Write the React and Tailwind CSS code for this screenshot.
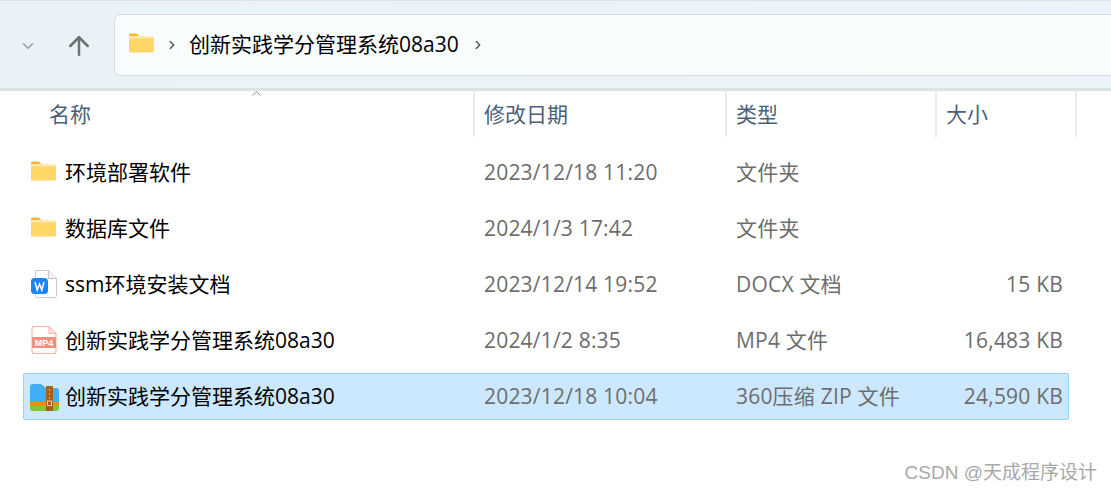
import { ChevronDown, ChevronRight, ChevronUp, ArrowUp } from 'lucide-react';

const latin = '[font-family:"Open_Sans","Noto_Sans_CJK_SC",sans-serif]';

const files = [
  { name: '环境部署软件', date: '2023/12/18 11:20', type: '文件夹', size: '', icon: 'folder' },
  { name: '数据库文件', date: '2024/1/3 17:42', type: '文件夹', size: '', icon: 'folder' },
  { name: 'ssm环境安装文档', date: '2023/12/14 19:52', type: 'DOCX 文档', size: '15 KB', icon: 'docx' },
  { name: '创新实践学分管理系统08a30', date: '2024/1/2 8:35', type: 'MP4 文件', size: '16,483 KB', icon: 'mp4' },
  { name: '创新实践学分管理系统08a30', date: '2023/12/18 10:04', type: '360压缩 ZIP 文件', size: '24,590 KB', icon: 'zip', selected: true },
];

function FolderIcon({ className }) {
  return (
    <svg viewBox="0 0 25 20" className={className}>
      <path d="M0 2a1.5 1.5 0 0 1 1.5-1.5h6l3 2.5H0z" fill="#f5b730" />
      <path d="M0 4.5h23.5a1.5 1.5 0 0 1 1.5 1.5v12a1.5 1.5 0 0 1-1.5 1.5h-22A1.5 1.5 0 0 1 0 18z" fill="#fed766" />
      <path d="M0 3h10.5l14 .4v2.1H0z" fill="#fbe9ab" />
    </svg>
  );
}

function DocxIcon() {
  return (
    <svg viewBox="0 0 26 28" className="w-[26px] h-[28px] -mt-[2px] ml-[1px]">
      <path d="M4.5 .5h13l8 8v17a2 2 0 0 1-2 2h-17a2 2 0 0 1-2-2z" fill="#fff" stroke="#c3c8d0" />
      <path d="M17.5 .5v8h8" fill="#f1f3f6" stroke="#c3c8d0" />
      <rect x="0" y="8" width="17" height="16" rx="3.5" fill="#1d85f3" />
      <path d="M4 12l2.2 8 2.3-6 2.3 6 2.2-8" fill="none" stroke="#fff" strokeWidth="1.5" />
    </svg>
  );
}

function Mp4Icon() {
  return (
    <svg viewBox="0 0 26 28" className="w-[26px] h-[28px] -mt-[1px] ml-[1px]">
      <path d="M1 2.5a2 2 0 0 1 2-2h15l7 7v18a2 2 0 0 1-2 2H3a2 2 0 0 1-2-2z" fill="#fff" stroke="#f8b4a8" strokeWidth="1.2" />
      <path d="M18 .5v7h7" fill="#fde2dd" stroke="#f8b4a8" />
      <rect x="1" y="11" width="24" height="11" fill="#f0907f" />
      <text x="13" y="20" textAnchor="middle" fontSize="9" fontWeight="700" fill="#fff" fontFamily="Liberation Sans, sans-serif">MP4</text>
    </svg>
  );
}

function ZipIcon() {
  return (
    <svg viewBox="0 0 29 28" className="w-[29px] h-[28px]">
      <path d="M0 4a3 3 0 0 1 3-3h8l5 4h10a3 3 0 0 1 3 3v12H0z" fill="#41aef6" />
      <path d="M0 19h29v3H0z" fill="#f58a12" />
      <path d="M0 22h29v3a3 3 0 0 1-3 3H3a3 3 0 0 1-3-3z" fill="#84c33a" />
      <rect x="16" y="3" width="7" height="25" fill="#a8611d" />
      <path d="M19.5 6v2M19.5 10v2M19.5 14v2" stroke="#d9a867" strokeWidth="1" />
      <rect x="17.5" y="18" width="4" height="4.5" fill="none" stroke="#f3d28f" strokeWidth="1" />
    </svg>
  );
}

const icons = {
  folder: <FolderIcon className="w-[25px] h-[20px] ml-[1px] mb-[4px]" />,
  docx: <DocxIcon />,
  mp4: <Mp4Icon />,
  zip: <ZipIcon />,
};

export default function App() {
  return (
    <div className={`w-[1111px] h-[491px] bg-white overflow-hidden relative text-[21px] ${latin}`}>
      <div className="h-[91px] border-b-[3px] border-t border-[#dce3e7] bg-gradient-to-r from-[#e9f3f7] to-[#ecf2f9] flex items-center">
        <div className="w-[114px] flex items-center shrink-0 pl-[19px] gap-[27px]">
          <ChevronDown className="w-[18px] h-[18px] mt-[3px] text-[#9a9a9a]" strokeWidth={2} />
          <ArrowUp className="w-[30px] h-[30px] mt-[3px] text-[#707070]" strokeWidth={2} />
        </div>
        <div className="flex-1 h-[62px] rounded-l-[6px] border border-r-0 border-[#d6dadd] bg-[#f8fcfd] flex items-center pl-[14px]">
          <FolderIcon className="w-[25px] h-[20px] mb-[4px]" />
          <ChevronRight className="w-[14px] h-[14px] ml-[11px] text-[#555]" strokeWidth={2.5} />
          <span className="ml-[10px] text-black">创新实践学分管理系统08a30</span>
          <ChevronRight className="w-[14px] h-[14px] ml-[12px] text-[#555]" strokeWidth={2.5} />
        </div>
      </div>

      <div className="relative grid grid-cols-[473px_252px_210px_142px] h-[46px] text-[#4c607a]">
        <ChevronUp className="absolute left-[249px] -top-[5px] w-[15px] h-[15px] text-[#8a8a8a]" strokeWidth={1.5} />
        <div className="pl-[49px] pt-[8px]">名称</div>
        <div className="pl-[9px] pt-[8px] border-l-2 border-[#ebebeb]">修改日期</div>
        <div className="pl-[9px] pt-[8px] border-l-2 border-[#ebebeb]">类型</div>
        <div className="pl-[9px] pt-[8px] border-x-2 border-[#ebebeb]">大小</div>
      </div>

      <div className="mt-[12px] ml-[23px] w-[1046px] flex flex-col gap-[10px]">
        {files.map((f, i) => (
          <div
            key={i}
            className={`h-[47px] -mb-[1px] grid grid-cols-[450px_252px_210px_134px] items-center rounded-[2px] border ${f.selected ? 'bg-[#cce8ff] border-[#99d1ff]' : 'border-transparent'}`}
          >
            <div className="flex items-center pl-[6px]">
              <div className="w-[35px] flex items-center">{icons[f.icon]}</div>
              <span className="text-black whitespace-nowrap">{f.name}</span>
            </div>
            <div className="pl-[10px] tracking-[0.2px] text-[#6d6d6d] whitespace-nowrap">{f.date}</div>
            <div className="pl-[10px] tracking-[0.2px] text-[#6d6d6d] whitespace-nowrap">{f.type}</div>
            <div className="pr-[7px] tracking-[0.2px] text-right text-[#6d6d6d] whitespace-nowrap">{f.size}</div>
          </div>
        ))}
      </div>

      <div className="absolute right-[14px] top-[459px] text-[19px] text-[#a8a8a8] [font-family:'Liberation_Sans','Noto_Sans_CJK_SC',sans-serif]">
        CSDN @天成程序设计
      </div>
    </div>
  );
}
